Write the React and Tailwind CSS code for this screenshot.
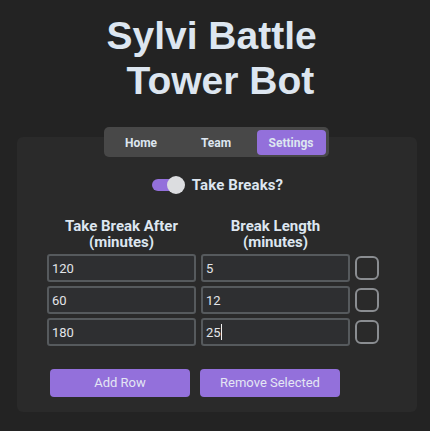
const ROWS = [
  { after: '120', length: '5' },
  { after: '60', length: '12' },
  { after: '180', length: '25', editing: true },
]

const TABS = ['Home', 'Team', 'Settings']

const INPUT =
  'h-[28px] w-full rounded-[3px] border-2 border-[#565a5d] bg-[#2e2f31] px-[3px] text-[13px] text-[#e2e4e8] outline-none'

export default function App() {
  return (
    <div className="min-h-[431px] w-[430px] bg-[#232323] font-['Roboto',sans-serif] text-[#dde6f0]">
      {/* Title */}
      <h1 className="pt-[13px] text-center font-['Liberation_Sans',Arial,sans-serif] text-[39px] font-bold leading-[45px] text-[#dde6f0]">
        <span className="block pl-[4px]">Sylvi Battle{'\u00a0'}</span>
        <span className="block">{'\u00a0'}Tower Bot</span>
      </h1>

      {/* Tabs */}
      <div className="relative z-10 mt-[24px] -mb-[20px] flex justify-center pl-[2px]">
        <div className="flex gap-[6px] rounded-[5px] bg-[#484848] px-[3px] pb-[2px] pt-[3px]">
          {TABS.map(t => (
            <button
              key={t}
              className={`h-[25px] w-[69px] rounded-[4px] text-[12px] font-bold ${t === 'Settings' ? 'bg-[#9370db]' : ''}`}
            >
              {t}
            </button>
          ))}
        </div>
      </div>

      {/* Card */}
      <div className="mx-[17px] w-[400px] rounded-[6px] bg-[#2a2a2a] pb-[15px] pt-[39px]">
        <div className="flex items-center justify-center gap-[7px] pl-[1px]">
          <div className="relative flex h-[18px] w-[33px] items-center">
            <div className="h-[12px] w-[30px] rounded-full bg-[#9370db]" />
            <div className="absolute right-0 top-0 h-[18px] w-[18px] rounded-full bg-[#dcdde0]" />
          </div>
          <span className="text-[15px] font-bold leading-[18px] tracking-[0.1px]">Take Breaks?</span>
        </div>

        <div className="ml-[30px] mt-[24px] mb-[4px] grid grid-cols-[149px_149px_24px] gap-x-[5px]">
          <div className="text-center text-[15px] font-bold leading-[16px]">Take Break After<br />(minutes)</div>
          <div className="text-center text-[15px] font-bold leading-[16px]">Break Length<br />(minutes)</div>
        </div>

        <div className="ml-[30px] grid grid-cols-[149px_149px_24px] gap-x-[5px] gap-y-[4px]">
          {ROWS.map((r, i) => (
            <div key={i} className="contents">
              <input defaultValue={r.after} className={INPUT} />
              <div className="relative">
                <input defaultValue={r.length} className={INPUT} />
                {r.editing && <span className="absolute left-[20px] top-[6px] h-[16px] w-[1px] bg-[#f0f0f0]" />}
              </div>
              <div className="flex items-center">
                <div className="h-[24px] w-[24px] rounded-[6px] border-2 border-[#8a8d91] bg-[#2a2a2a]" />
              </div>
            </div>
          ))}
        </div>

        <div className="ml-[33px] mt-[23px] flex gap-[10px]">
          <button className="h-[28px] w-[140px] rounded-[4px] bg-[#9370db] text-[13px] text-[#e4e6f4]">Add Row</button>
          <button className="h-[28px] w-[140px] rounded-[4px] bg-[#9370db] text-[13px] text-[#e4e6f4]">Remove Selected</button>
        </div>
      </div>
    </div>
  )
}
